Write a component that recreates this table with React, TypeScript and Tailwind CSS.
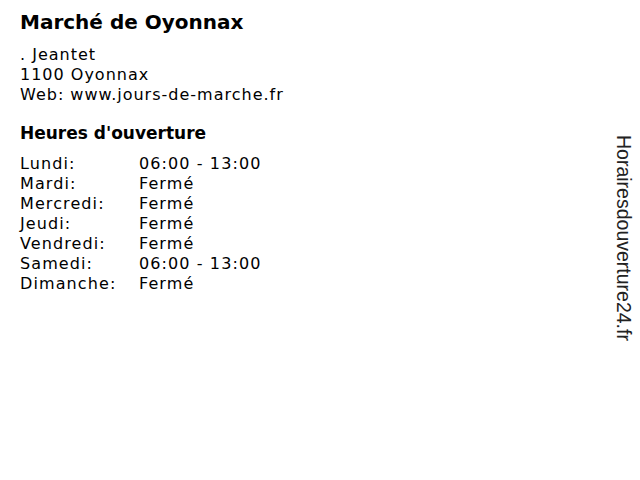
import React from "react";

const hours: [string, string][] = [
  ["Lundi:", "06:00 - 13:00"],
  ["Mardi:", "Fermé"],
  ["Mercredi:", "Fermé"],
  ["Jeudi:", "Fermé"],
  ["Vendredi:", "Fermé"],
  ["Samedi:", "06:00 - 13:00"],
  ["Dimanche:", "Fermé"],
];

const App: React.FC = () => {
  return (
    <div className="flex h-[480px] w-[640px] bg-white text-black font-['DejaVu_Sans',sans-serif]">
      <div className="flex-1 pl-5 pt-[10px]">
        <h1 className="text-[20px] font-bold leading-6">Marché de Oyonnax</h1>
        <div className="mt-[11px] text-[16px] leading-5 tracking-[1px]">
          <div>. Jeantet</div>
          <div>1100 Oyonnax</div>
          <div>Web: www.jours-de-marche.fr</div>
        </div>
        <h2 className="mt-[16px] text-[17px] font-bold leading-6">Heures d'ouverture</h2>
        <div className="mt-[9px] text-[16px] leading-5 tracking-[1.1px]">
          {hours.map(([day, time]) => (
            <div key={day} className="flex">
              <span className="w-[119px]">{day}</span>
              <span>{time}</span>
            </div>
          ))}
        </div>
      </div>
      <div className="flex w-[40px] justify-center pl-2 pt-[135px]">
        <span className="whitespace-nowrap text-[19.5px] leading-5 text-[#222] font-['Liberation_Sans',sans-serif] [writing-mode:vertical-rl]">
          Horairesdouverture24.fr
        </span>
      </div>
    </div>
  );
};

export default App;
